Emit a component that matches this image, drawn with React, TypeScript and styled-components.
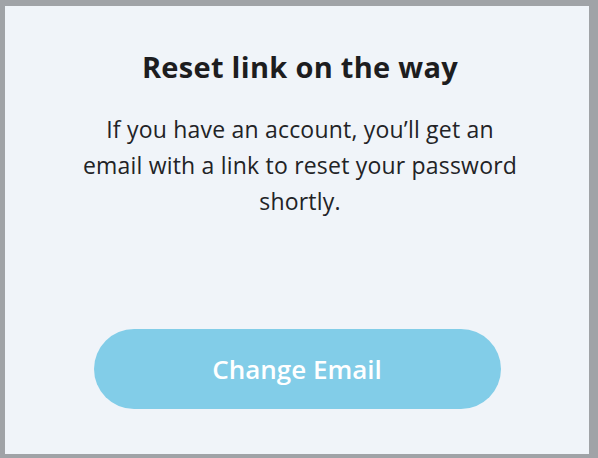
import React from "react";
import styled, { createGlobalStyle } from "styled-components";

const GlobalStyle = createGlobalStyle`
  html, body {
    margin: 0;
    padding: 0;
    background: #a0a3a7;
  }
  body {
    font-family: "Open Sans", Arial, sans-serif;
  }
`;

const Frame = styled.div`
  width: 598px;
  height: 458px;
  box-sizing: border-box;
  padding: 6px 9px 4px 5px;
  background: #a0a3a7;
`;

const Panel = styled.main`
  height: 100%;
  box-sizing: border-box;
  background: #f0f4f9;
  display: flex;
  flex-direction: column;
  align-items: center;
  padding: 43px 0 0 0;
`;

const Title = styled.h1`
  margin: 0;
  font-family: "Open Sans", sans-serif;
  font-weight: 700;
  font-size: 29px;
  line-height: 36px;
  letter-spacing: 0.3px;
  color: #1d1d1f;
  text-align: center;
  padding-left: 6px;
`;

const Message = styled.p`
  margin: 26px 0 0 0;
  width: 446px;
  padding-left: 6px;
  font-family: "Open Sans", sans-serif;
  font-weight: 400;
  font-size: 23px;
  line-height: 36px;
  letter-spacing: 0.2px;
  color: #222326;
  text-align: center;
`;

const Action = styled.button`
  margin-top: 110px;
  width: 407px;
  height: 80px;
  border: none;
  border-radius: 40px;
  background: #82cde8;
  color: #ffffff;
  font-family: "Open Sans", sans-serif;
  font-weight: 600;
  font-size: 26px;
  cursor: pointer;
`;

export default function App() {
  return (
    <>
      <GlobalStyle />
      <Frame>
        <Panel>
          <Title>Reset link on the way</Title>
          <Message>
            If you have an account, you’ll get an email with a link to reset your password shortly.
          </Message>
          <Action type="button">Change Email</Action>
        </Panel>
      </Frame>
    </>
  );
}
